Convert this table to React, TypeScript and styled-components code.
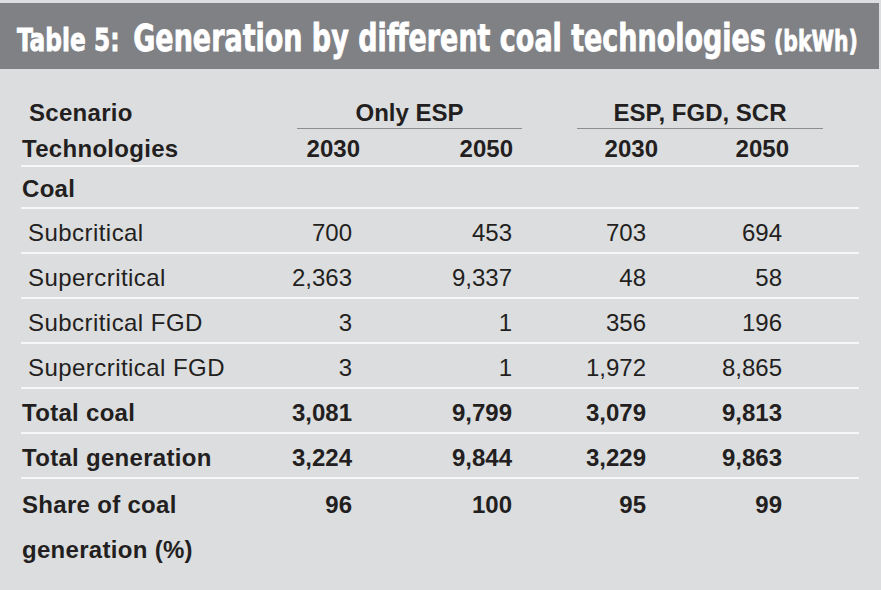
import styled, { createGlobalStyle } from 'styled-components';

const GlobalStyle = createGlobalStyle`
  html, body {
    margin: 0;
    padding: 0;
    background: #dcdddf;
  }
`;

type Row = {
  label: string;
  values: string[];
  bold?: boolean;
  indent?: boolean;
};

const rows: Row[] = [
  { label: 'Subcritical', values: ['700', '453', '703', '694'], indent: true },
  { label: 'Supercritical', values: ['2,363', '9,337', '48', '58'], indent: true },
  { label: 'Subcritical FGD', values: ['3', '1', '356', '196'], indent: true },
  { label: 'Supercritical FGD', values: ['3', '1', '1,972', '8,865'], indent: true },
  { label: 'Total coal', values: ['3,081', '9,799', '3,079', '9,813'], bold: true },
  { label: 'Total generation', values: ['3,224', '9,844', '3,229', '9,863'], bold: true },
];

const years = [
  { text: '2030', nudge: 8 },
  { text: '2050', nudge: 1 },
  { text: '2030', nudge: 12 },
  { text: '2050', nudge: 7 },
];

const columns = '239px 92px 160px 134px 136px 1fr';

const Page = styled.div`
  width: 881px;
  height: 590px;
  box-sizing: border-box;
  padding-top: 3px;
  background: #dcdddf;
  overflow: hidden;
`;

const TitleBar = styled.div`
  height: 66px;
  margin-right: 2px;
  padding-left: 17px;
  display: flex;
  align-items: center;
  background: #808185;
  overflow: hidden;
  white-space: nowrap;
`;

const TitleText = styled.div`
  display: inline-block;
  margin-top: 4px;
  transform: scaleX(0.81);
  transform-origin: left center;
  color: #fff;
  font-family: 'DejaVu Sans Condensed', 'DejaVu Sans', sans-serif;
  font-weight: bold;
  line-height: 1;
  -webkit-text-stroke: 0.8px #fff;
`;

const TitlePart = styled.span<{ $size: number; $space?: number }>`
  font-size: ${(p) => p.$size}px;
  margin-right: ${(p) => p.$space ?? 0}px;
`;

const Table = styled.div`
  margin: 24px 22px 0 21px;
  font-family: 'Liberation Sans', Arial, sans-serif;
  font-size: 24px;
  color: #231f20;
`;

const GridRow = styled.div<{ $height: number; $line?: boolean }>`
  display: grid;
  grid-template-columns: ${columns};
  align-items: center;
  box-sizing: border-box;
  height: ${(p) => p.$height}px;
  padding-top: 4px;
  border-bottom: ${(p) => (p.$line ? '2px solid #f7f7f8' : 'none')};
`;

const Label = styled.div<{ $indent?: number; $bold?: boolean }>`
  padding-left: ${(p) => p.$indent ?? 1}px;
  font-weight: ${(p) => (p.$bold ? 'bold' : 'normal')};
  letter-spacing: ${(p) => (p.$bold ? 0.3 : 0.45)}px;
  white-space: nowrap;
`;

const Num = styled.div<{ $bold?: boolean }>`
  text-align: right;
  font-weight: ${(p) => (p.$bold ? 'bold' : 'normal')};
`;

const GroupHead = styled.div<{ $from: number; $inset: number; $overhang: number }>`
  grid-column: ${(p) => p.$from} / span 2;
  align-self: stretch;
  display: flex;
  align-items: center;
  justify-content: center;
  margin-top: -4px;
  margin-left: ${(p) => p.$inset}px;
  margin-right: ${(p) => -p.$overhang}px;
  padding-top: 4px;
  border-bottom: 1px solid #8d8e91;
  font-weight: bold;
`;

const Year = styled.div<{ $nudge: number }>`
  justify-self: end;
  margin-right: ${(p) => -p.$nudge}px;
  font-weight: bold;
`;

const ShareRow = styled.div`
  display: grid;
  grid-template-columns: ${columns};
  align-items: start;
  padding-top: 3px;
  line-height: 45px;
`;

export default function App() {
  return (
    <Page>
      <GlobalStyle />
      <TitleBar>
        <TitleText>
          <TitlePart $size={32} $space={17}>Table 5:</TitlePart>
          <TitlePart $size={37} $space={10}>Generation by different coal technologies</TitlePart>
          <TitlePart $size={28}>(bkWh)</TitlePart>
        </TitleText>
      </TitleBar>
      <Table>
        <GridRow $height={36}>
          <Label $indent={8} $bold>Scenario</Label>
          <GroupHead $from={2} $inset={37} $overhang={10}>Only ESP</GroupHead>
          <GroupHead $from={4} $inset={65} $overhang={41}>ESP, FGD, SCR</GroupHead>
        </GridRow>
        <GridRow $height={38} $line>
          <Label $bold>Technologies</Label>
          {years.map((y, i) => (
            <Year key={i} $nudge={y.nudge}>{y.text}</Year>
          ))}
        </GridRow>
        <GridRow $height={42} $line>
          <Label $bold>Coal</Label>
        </GridRow>
        {rows.map((r) => (
          <GridRow key={r.label} $height={45} $line>
            <Label $indent={r.indent ? 7 : 1} $bold={r.bold}>{r.label}</Label>
            {r.values.map((v, i) => (
              <Num key={i} $bold={r.bold}>{v}</Num>
            ))}
          </GridRow>
        ))}
        <ShareRow>
          <Label $bold>
            Share of coal
            <br />
            generation (%)
          </Label>
          <Num $bold>96</Num>
          <Num $bold>100</Num>
          <Num $bold>95</Num>
          <Num $bold>99</Num>
        </ShareRow>
      </Table>
    </Page>
  );
}
